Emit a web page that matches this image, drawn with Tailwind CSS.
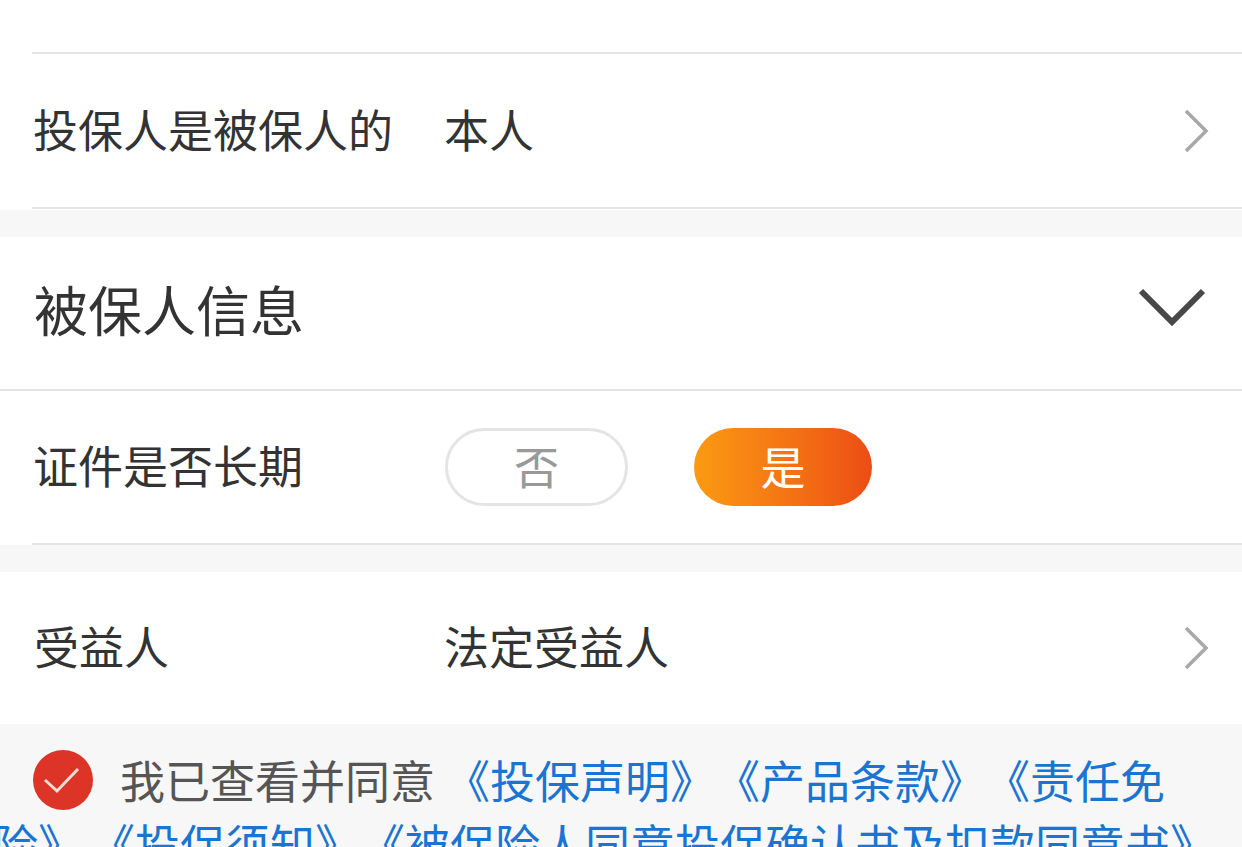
<!DOCTYPE html>
<html lang="zh-CN">
<head>
    <meta charset="UTF-8">
    <meta name="viewport" content="width=device-width, initial-scale=1.0">
    <title>投保信息</title>
    <script src="https://cdn.jsdelivr.net/npm/@tailwindcss/browser@4"></script>
</head>
<body class="bg-[#f7f7f7] h-[847px] overflow-hidden font-['Noto_Sans_CJK_SC','Noto_Sans',sans-serif] text-[#333333]">

<!-- 投保人 -->
<div class="bg-white h-[210px]">
    <div class="h-[54px] ml-8 border-b-2 border-[#e4e4e4]"></div>
    <div class="h-[155px] ml-8 border-b-2 border-[#e4e4e4] flex items-center text-[45px] leading-none">
        <span class="w-[412px] pl-[1px] pb-[4px] whitespace-nowrap">投保人是被保人的</span>
        <span class="pb-[4px] whitespace-nowrap">本人</span>
        <svg class="ml-auto mr-[31px]" width="28" height="46" viewBox="0 0 28 46" fill="none">
            <path d="M3 3 L23 23 L3 43" stroke="#a8a8a8" stroke-width="3.5"/>
        </svg>
    </div>
</div>

<!-- 被保人信息 -->
<div class="mt-[27px] bg-white h-[308px]">
    <div class="h-[154px] border-b-2 border-[#e4e4e4] flex items-center pl-[34px] text-[54px] leading-none">
        <span class="pb-[8px] whitespace-nowrap">被保人信息</span>
        <svg class="ml-auto mr-[36px] mb-[8px]" width="68" height="42" viewBox="0 0 68 42" fill="none">
            <path d="M3 3 L34 34 L65 3" stroke="#484848" stroke-width="6"/>
        </svg>
    </div>
    <div class="h-[154px] ml-8 border-b-2 border-[#e4e4e4] flex items-center text-[45px] leading-none">
        <span class="w-[413px] pl-[1px] pb-[6px] whitespace-nowrap">证件是否长期</span>
        <div class="w-[183px] h-[78px] rounded-full border-[3px] border-[#e4e4e4] text-[#999999] flex items-center justify-center pb-[4px]">否</div>
        <div class="ml-[66px] w-[178px] h-[78px] rounded-full bg-gradient-to-r from-[#fb9a12] to-[#ec4c14] text-white flex items-center justify-center pb-[4px]">是</div>
    </div>
</div>

<!-- 受益人 -->
<div class="mt-[27px] bg-white h-[152px] flex items-center pl-[34px] text-[45px] leading-none">
    <span class="w-[410px] pb-[6px] whitespace-nowrap">受益人</span>
    <span class="pb-[6px] whitespace-nowrap">法定受益人</span>
    <svg class="ml-auto mr-[31px]" width="28" height="46" viewBox="0 0 28 46" fill="none">
        <path d="M3 3 L23 23 L3 43" stroke="#a8a8a8" stroke-width="3.5"/>
    </svg>
</div>

<!-- 协议 -->
<div class="pt-[25px] text-[45px] leading-[60px] whitespace-nowrap">
    <div class="flex items-center pl-8">
        <svg class="shrink-0" width="62" height="62" viewBox="0 0 62 62" fill="none">
            <circle cx="31" cy="31" r="30" fill="#dc3426"/>
            <path d="M13 31 L25 42 L46 20" stroke="#f7dcd6" stroke-width="3"/>
        </svg>
        <span class="ml-[26px] text-[#555555]">我已查看并同意</span>
        <span class="ml-[10px] text-[#1a75d2]">《投保声明》</span>
        <span class="text-[#1a75d2]">《产品条款》</span>
        <span class="text-[#1a75d2]">《责任免</span>
    </div>
    <div class="flex -ml-[7px] mt-[3px] text-[#1a75d2]">
        <span>险》</span>
        <span class="ml-[7px]">《投保须知》</span>
        <span>《被保险人同意投保确认书及扣款同意书》</span>
    </div>
</div>

</body>
</html>
